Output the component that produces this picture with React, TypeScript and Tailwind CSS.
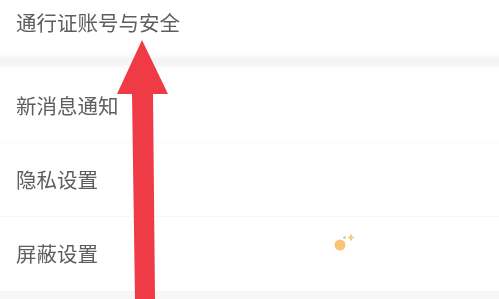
import React from "react";

export default function App() {
  const font = { fontFamily: '"Noto Sans CJK SC", "Noto Sans", sans-serif' };
  return (
    <div className="relative w-[499px] h-[299px] overflow-hidden bg-white" style={font}>
      <div className="flex flex-col">
        <div className="h-[54px] flex items-start pt-[8px] pl-[16px]">
          <span className="text-[20.5px] leading-[28px] text-[#5e5e5e] blur-[0.3px]">通行证账号与安全</span>
        </div>
        <div className="h-[15px] bg-[linear-gradient(to_bottom,#ffffff,#f4f4f4_35%,#f5f5f5_70%,#ffffff)]" />
        <div className="h-[74px] flex items-center pl-[16px] border-b border-[#fafafa]">
          <span className="text-[20.5px] leading-[28px] text-[#5e5e5e] blur-[0.3px] -mt-[2px]">新消息通知</span>
        </div>
        <div className="h-[74px] flex items-center pl-[16px] border-b border-[#f8f8f8]">
          <span className="text-[20.5px] leading-[28px] text-[#5e5e5e] blur-[0.3px] -mt-[2px]">隐私设置</span>
        </div>
        <div className="h-[74px] flex items-center pl-[16px]">
          <span className="text-[20.5px] leading-[28px] text-[#5e5e5e] blur-[0.3px] -mt-[2px]">屏蔽设置</span>
        </div>
        <div className="h-[20px] bg-[#f6f6f6]" />
      </div>

      <svg className="absolute left-0 top-0" width="499" height="299" viewBox="0 0 499 299">
        <polygon
          points="142,40 168,94 153,94 155,299 135,299 132,94 117,94"
          fill="#ee3b46"
        />
        <circle cx="340" cy="245" r="5.5" fill="#fcc27a" />
        <rect x="348" y="236.5" width="6" height="2" fill="#fbc98a" />
        <rect x="350" y="234.5" width="2" height="6" fill="#fbc98a" />
        <circle cx="344.5" cy="237.5" r="1.3" fill="#9ed59e" />
      </svg>
    </div>
  );
}
